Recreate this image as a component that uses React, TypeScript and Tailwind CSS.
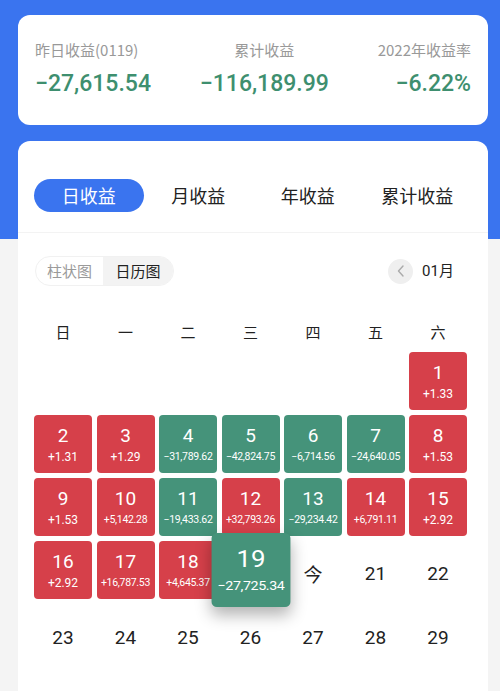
import React from 'react';

type Day = { d: number; v?: string; up?: boolean };

const days: (Day | null)[] = [
    null, null, null, null, null, null,
    { d: 1, v: '+1.33', up: true },
    { d: 2, v: '+1.31', up: true },
    { d: 3, v: '+1.29', up: true },
    { d: 4, v: '−31,789.62' },
    { d: 5, v: '−42,824.75' },
    { d: 6, v: '−6,714.56' },
    { d: 7, v: '−24,640.05' },
    { d: 8, v: '+1.53', up: true },
    { d: 9, v: '+1.53', up: true },
    { d: 10, v: '+5,142.28', up: true },
    { d: 11, v: '−19,433.62' },
    { d: 12, v: '+32,793.26', up: true },
    { d: 13, v: '−29,234.42' },
    { d: 14, v: '+6,791.11', up: true },
    { d: 15, v: '+2.92', up: true },
    { d: 16, v: '+2.92', up: true },
    { d: 17, v: '+16,787.53', up: true },
    { d: 18, v: '+4,645.37', up: true },
    { d: 19, v: '−27,725.34' },
    { d: 20 },
    { d: 21 },
    { d: 22 },
    { d: 23 }, { d: 24 }, { d: 25 }, { d: 26 }, { d: 27 }, { d: 28 }, { d: 29 },
];

const weekdays = ['日', '一', '二', '三', '四', '五', '六'];
const tabs = ['日收益', '月收益', '年收益', '累计收益'];

const cjk = "font-['Noto_Sans_CJK_SC',sans-serif]";
const num = "font-['Roboto','Noto_Sans_CJK_SC',sans-serif]";

const DayCell = ({ day }: { day: Day | null }) => {
    if (!day) return <div className="h-[58px]" />;
    if (!day.v) {
        const row5 = day.d > 22;
        return (
            <div className={`h-[58px] flex items-center justify-center text-[19px] text-[#222] ${row5 ? 'pt-[10px]' : 'pt-[8px]'} ${day.d === 20 ? cjk : num}`}>
                {day.d === 20 ? '今' : day.d}
            </div>
        );
    }
    const selected = day.d === 19;
    const long = day.v.length > 6;
    return (
        <div
            className={`h-[58px] rounded-[4px] flex flex-col items-center justify-center text-white ${num} ${
                day.up ? 'bg-[#d6404a]' : 'bg-[#45937a]'
            } ${selected ? 'relative z-10 scale-x-[1.36] scale-y-[1.28] shadow-[0_6px_12px_rgba(0,0,0,0.3)]' : ''}`}
        >
            <span className="text-[19px] leading-[22px]">{day.d}</span>
            <span
                className={`leading-[14px] mt-[3px] whitespace-nowrap ${
                    long ? 'text-[10.5px] tracking-[-0.3px]' : 'text-[12px]'
                }`}
            >
                {day.v}
            </span>
        </div>
    );
};

export default function App() {
    return (
        <div className={`w-[500px] h-[691px] overflow-hidden bg-[linear-gradient(#3a74ef_0,#3a74ef_239px,#f4f4f4_239px)] ${cjk}`}>
            <div className="pt-[15px] pl-[18px] pr-[12px]">
                {/* summary card */}
                <div className="h-[110px] bg-white rounded-[12px] px-[17px] pt-[25px] flex justify-between">
                    <div className="flex flex-col items-start">
                        <span className="text-[15px] text-[#999] leading-[20px]">昨日收益(0119)</span>
                        <span className={`text-[23px] font-medium text-[#3e8f6f] leading-[30px] mt-[9px] ${num}`}>−27,615.54</span>
                    </div>
                    <div className="flex flex-col items-center">
                        <span className="text-[15px] text-[#999] leading-[20px]">累计收益</span>
                        <span className={`text-[23px] font-medium text-[#3e8f6f] leading-[30px] mt-[9px] ${num}`}>−116,189.99</span>
                    </div>
                    <div className="flex flex-col items-end">
                        <span className="text-[15px] text-[#999] leading-[20px]">2022年收益率</span>
                        <span className={`text-[23px] font-medium text-[#3e8f6f] leading-[30px] mt-[9px] ${num}`}>−6.22%</span>
                    </div>
                </div>

                {/* calendar card */}
                <div className="mt-[16px] bg-white rounded-t-[12px] h-[560px]">
                    <div className="px-[16px] pt-[38px] pb-[20px] border-b border-[#f3f3f3] grid grid-cols-4">
                        {tabs.map((t, i) => (
                            <div
                                key={t}
                                className={`h-[33px] flex items-center justify-center rounded-full text-[18px] ${
                                    i === 0 ? 'bg-[#3a74ef] text-white' : 'text-[#222]'
                                }`}
                            >
                                {t}
                            </div>
                        ))}
                    </div>

                    <div className="px-[17px] pt-[23px] flex items-center justify-between">
                        <div className="flex h-[30px] rounded-full border border-[#f1f1f1] overflow-hidden text-[15px]">
                            <div className="w-[67px] flex items-center justify-center text-[#9a9a9a]">柱状图</div>
                            <div className="w-[70px] flex items-center justify-center text-[#222] bg-[#f3f3f3]">日历图</div>
                        </div>
                        <div className="flex items-center gap-[9px] pr-[17px]">
                            <div className="w-[25px] h-[25px] rounded-full bg-[#efefef] flex items-center justify-center">
                                <svg width="12" height="14" viewBox="0 0 12 14" fill="none">
                                    <path d="M8 2L3.5 7L8 12" stroke="#aaa" strokeWidth="1.4" strokeLinecap="round" strokeLinejoin="round" />
                                </svg>
                            </div>
                            <span className={`text-[15px] text-[#222] ${num}`}>01<span className={cjk}>月</span></span>
                        </div>
                    </div>

                    <div className="pl-[16px] pr-[21px] pt-[36px] grid grid-cols-7 gap-x-[4.5px]">
                        {weekdays.map(w => (
                            <div key={w} className="text-center text-[15px] text-[#222] leading-[20px]">{w}</div>
                        ))}
                    </div>

                    <div className="pl-[16px] pr-[21px] pt-[10px] grid grid-cols-7 gap-x-[4.5px] gap-y-[5px]">
                        {days.map((d, i) => (
                            <DayCell key={i} day={d} />
                        ))}
                    </div>
                </div>
            </div>
        </div>
    );
}
